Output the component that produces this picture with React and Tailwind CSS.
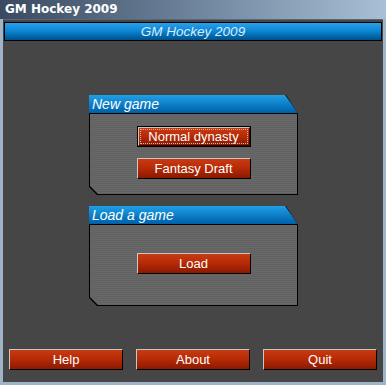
import React from "react";

const font = { fontFamily: '"Liberation Sans", Arial, sans-serif' };

function RedButton({ label, focused }) {
  if (focused) {
    return (
      <button className="w-[114px] h-[21px] border border-black p-0 bg-black" style={font}>
        <span className="relative w-full h-full flex items-center justify-center border border-t-[#c8c8c8] border-l-[#c8c8c8] border-r-[#3a0a00] border-b-[#3a0a00] bg-gradient-to-b from-[#c83a12] via-[#b52a05] to-[#8a1a02] text-white text-[13px] leading-none">
          <span className="absolute inset-[1px] border border-dotted border-[#e0b0a0]" />
          {label}
        </span>
      </button>
    );
  }
  return (
    <button
      className="w-[114px] h-[21px] border border-t-[#c8c8c8] border-l-[#c8c8c8] border-r-black border-b-black bg-gradient-to-b from-[#c83a12] via-[#b52a05] to-[#8a1a02] text-white text-[13px] leading-none flex items-center justify-center"
      style={font}
    >
      {label}
    </button>
  );
}

function Panel({ title, children }) {
  return (
    <div className="w-[209px] flex flex-col">
      <div className="h-[19px] bg-black [clip-path:polygon(0_0,197px_0,100%_100%,0_100%)]">
        <div className="h-[18px] bg-gradient-to-b from-[#1ea0e8] to-[#0060a8] text-white italic text-[14px] leading-[18px] pl-[3px] [clip-path:polygon(0_0,196px_0,100%_100%,0_100%)]" style={font}>
          {title}
        </div>
      </div>
      <div className="h-[81px] bg-black [clip-path:polygon(0_0,100%_0,100%_100%,8px_100%,0_calc(100%-8px))]">
        <div className="h-[80px] mx-px pb-[4px] bg-[repeating-linear-gradient(180deg,#686868_0px,#686868_1px,#626262_1px,#626262_2px)] [clip-path:polygon(0_0,100%_0,100%_100%,8px_100%,0_calc(100%-8px))] flex flex-col items-center justify-center gap-[11px]">
          {children}
        </div>
      </div>
    </div>
  );
}

export default function App() {
  return (
    <div className="w-[386px] h-[385px] bg-[#a0b4c8] p-[3px] pt-0 flex flex-col">
      <div className="h-[19px] -mx-[3px] bg-gradient-to-r from-[#3a4a60] via-[#6e849c] to-[#a8c0d6] text-white font-bold text-[12px] leading-[19px] pl-[5px]" style={{ fontFamily: '"DejaVu Sans", Verdana, sans-serif' }}>
        GM Hockey 2009
      </div>
      <div className="flex-1 bg-[#464646] border-t border-t-[#58687a] flex flex-col pb-[12px]">
        <div className="mx-px mt-[2px] h-[19px] border border-black bg-gradient-to-b from-[#28a0ec] via-[#0a84d0] to-[#00508c] text-[#d8ecff] italic text-[13.5px] leading-[17px] text-center" style={font}>
          GM Hockey 2009
        </div>
        <div className="flex flex-col items-center gap-[11px] mt-[54px] pl-[1px]">
          <Panel title="New game">
            <RedButton label="Normal dynasty" focused />
            <RedButton label="Fantasy Draft" />
          </Panel>
          <Panel title="Load a game">
            <RedButton label="Load" />
          </Panel>
        </div>
        <div className="mt-auto flex justify-between px-[6px]">
          <RedButton label="Help" />
          <RedButton label="About" />
          <RedButton label="Quit" />
        </div>
      </div>
    </div>
  );
}
